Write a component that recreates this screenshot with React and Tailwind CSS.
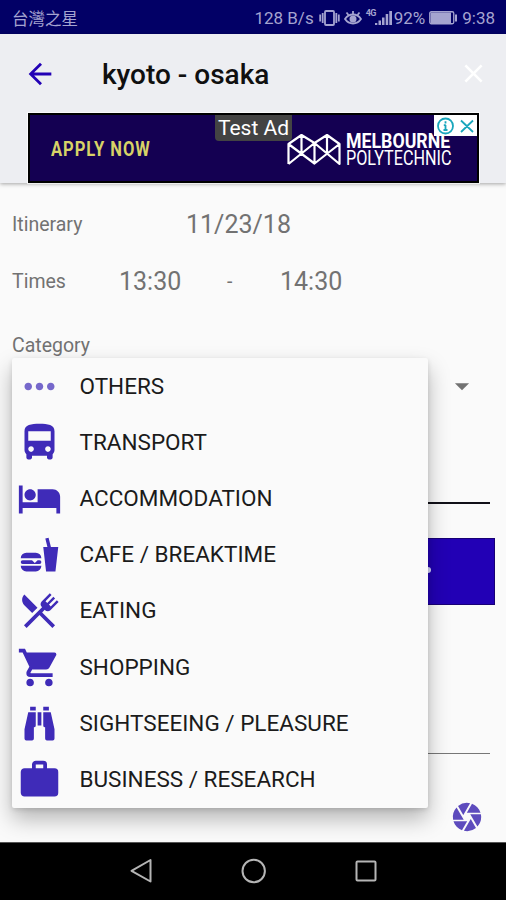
import { MdArrowBack, MdArrowDropDown, MdCamera, MdClose, MdDirectionsBus, MdHotel, MdMoreHoriz } from 'react-icons/md';

function Glyph({ d, className }) {
  return (
    <svg viewBox="0 0 24 24" fill="currentColor" className={className}>
      <path d={d} />
    </svg>
  );
}

const paths = {
  food: 'M15.5,21L14,8H16.23L15.1,3.46L16.84,3L18.09,8H22L20.5,21H15.5M5,11H10A3,3 0 0,1 13,14H2A3,3 0 0,1 5,11M13,18A3,3 0 0,1 10,21H5A3,3 0 0,1 2,18H13M3,15H8L9.5,16.5L11,15H12A1,1 0 0,1 13,16A1,1 0 0,1 12,17H3A1,1 0 0,1 2,16A1,1 0 0,1 3,15Z',
  silverware: 'M8.1,13.34L3.91,9.16C2.35,7.59 2.35,5.06 3.91,3.5L10.93,10.5L8.1,13.34M13.41,13L20.29,19.88L18.88,21.29L12,14.41L5.12,21.29L3.71,19.88L13.36,10.22L13.16,10C12.38,9.23 12.38,7.97 13.16,7.19L17.5,2.82L18.43,3.74L15.19,7L16.15,7.94L19.39,4.69L20.31,5.61L17.06,8.85L18,9.81L21.26,6.56L22.18,7.5L17.81,11.84C17.03,12.62 15.77,12.62 15,11.84L14.78,11.64L13.41,13Z',
  cart: 'M17,18C15.89,18 15,18.89 15,20A2,2 0 0,0 17,22A2,2 0 0,0 19,20C19,18.89 18.1,18 17,18M1,2V4H3L6.6,11.59L5.24,14.04C5.09,14.32 5,14.65 5,15A2,2 0 0,0 7,17H19V15H7.42A0.25,0.25 0 0,1 7.17,14.75C7.17,14.7 7.18,14.66 7.2,14.63L8.1,13H15.55C16.3,13 16.96,12.58 17.3,11.97L20.88,5.5C20.95,5.34 21,5.17 21,5A1,1 0 0,0 20,4H5.21L4.27,2M7,18C5.89,18 5,18.89 5,20A2,2 0 0,0 7,22A2,2 0 0,0 9,20C9,18.89 8.1,18 7,18Z',
  binoculars: 'M11,6H13V13H11V6M9,20A1,1 0 0,1 8,21H5A1,1 0 0,1 4,20V15L6,6H10V13A1,1 0 0,1 9,14V20M10,5H7V3H10V5M15,20V14A1,1 0 0,1 14,13V6H18L20,15V20A1,1 0 0,1 19,21H16A1,1 0 0,1 15,20M14,5V3H17V5H14Z',
  briefcase: 'M10,2H14A2,2 0 0,1 16,4V6H20A2,2 0 0,1 22,8V19A2,2 0 0,1 20,21H4C2.89,21 2,20.1 2,19V8C2,6.89 2.89,6 4,6H8V4C8,2.89 8.89,2 10,2M14,6V4H10V6H14Z',
};

const iconClass = 'w-[45px] h-[45px] shrink-0';

const categories = [
  { label: 'OTHERS', icon: <MdMoreHoriz className="w-[45px] h-[45px] shrink-0 opacity-70" /> },
  { label: 'TRANSPORT', icon: <MdDirectionsBus className={iconClass} /> },
  { label: 'ACCOMMODATION', icon: <MdHotel className={iconClass} /> },
  { label: 'CAFE / BREAKTIME', icon: <Glyph d={paths.food} className={iconClass} /> },
  { label: 'EATING', icon: <Glyph d={paths.silverware} className={iconClass} /> },
  { label: 'SHOPPING', icon: <Glyph d={paths.cart} className={iconClass} /> },
  { label: 'SIGHTSEEING / PLEASURE', icon: <Glyph d={paths.binoculars} className={iconClass} /> },
  { label: 'BUSINESS / RESEARCH', icon: <Glyph d={paths.briefcase} className={iconClass} /> },
];

function StatusBar() {
  return (
    <div className="h-[34px] shrink-0 flex items-center bg-[#020066] text-[#a5a4d0] text-[17px] leading-none pl-3 pr-[11px] pt-0.5">
      <span className="font-['Noto_Sans_CJK_TC',sans-serif] text-[16.5px]">台灣之星</span>
      <span className="ml-auto">128 B/s</span>
      <svg width="21" height="18" viewBox="0 0 21 18" fill="none" stroke="currentColor" strokeWidth="1.8" className="ml-[5px]">
        <rect x="6" y="2" width="9" height="14" rx="1" />
        <path d="M3.700 4v10M1.200 5.500v7M17.300 4v10M19.800 5.500v7" />
      </svg>
      <svg width="18" height="18" viewBox="0 0 18 18" fill="none" stroke="currentColor" strokeWidth="1.8" className="ml-[4px]">
        <path d="M1 10c4-6 12-6 16 0-4 6-12 6-16 0z" />
        <circle cx="9" cy="10" r="2.600" fill="currentColor" />
        <path d="M9 5V2M4.500 6L2.500 3.500M13.500 6l2-2.500" />
      </svg>
      <div className="relative ml-1 w-[27px] h-[18px]">
        <span className="absolute left-0 top-0 text-[9px] font-bold tracking-[-0.5px]">4G</span>
        <svg width="27" height="18" viewBox="0 0 27 18" fill="currentColor">
          <path d="M9 14h2.300v2H9zM12.500 11.500h2.500V16h-2.500zM16 8.500h2.500V16H16zM19.700 5h2.500v11h-2.500zM23.300 2H26v14h-2.700z" />
        </svg>
      </div>
      <span className="ml-[1px]">92%</span>
      <svg width="29" height="14" viewBox="0 0 29 14" className="ml-[4px]">
        <rect x=".75" y=".75" width="24" height="12" rx="1.500" fill="none" stroke="currentColor" strokeWidth="1.300" />
        <path d="M1.500 1.500h20.500v10.500H1.500zM26 3.500h2v7h-2z" fill="currentColor" />
      </svg>
      <span className="ml-[4px]">9:38</span>
    </div>
  );
}

function AdBanner() {
  return (
    <div className="relative ml-[28px] w-[451px] h-[70px] flex items-center bg-[#140052] border-2 border-black outline outline-1 outline-white/70">
      <span className="ml-[21px] mt-[3px] w-[103px] text-[19.5px] font-bold text-[#d8d267] whitespace-nowrap">
        <span className="inline-block origin-left scale-x-[0.85] tracking-[1.1px]">APPLY NOW</span>
      </span>
      <svg width="54" height="34" viewBox="0 0 54 34" fill="none" stroke="white" strokeWidth="2.200" strokeLinejoin="round" className="ml-auto mr-[5px] mt-[3px]">
        <path d="M1.500 31V11L14.500 2l13 8 12.500-8 12.500 9v20L27.500 10 1.500 31M1.500 11l26 19.500 25-19.500M14.500 2v18.500M40 2v18.500M27.500 10v20.500" />
      </svg>
      <div className="w-[106px] mr-[25px] mt-[3px] text-white text-[19.5px] leading-[17px] whitespace-nowrap">
        <div className="origin-left scale-x-[0.91] font-bold">MELBOURNE</div>
        <div className="origin-left scale-x-[0.83]">POLYTECHNIC</div>
      </div>
      <div className="absolute left-[185px] top-0 h-[26px] w-[77px] rounded-b-sm bg-[#434343] text-white text-[21px] leading-[27px] text-center whitespace-nowrap">
        Test Ad
      </div>
      <div className="absolute right-0 top-0 w-[43px] h-[21px] flex items-center justify-center bg-white text-[#19a6bc]">
        <svg width="40" height="18" viewBox="0 0 40 18" fill="none" stroke="currentColor" strokeWidth="1.800">
          <circle cx="9.500" cy="9" r="7.500" />
          <path d="M9.500 8v5.500M9.500 4.200v2.200M7.800 8.200h2M7.500 13h4M25 3.500l12 11.500M37 3.500L25 15" />
        </svg>
      </div>
    </div>
  );
}

function CategoryMenu() {
  return (
    <div className="absolute left-3 top-[175px] w-[416px] rounded-[2px] bg-[#fafafa] shadow-[0_11px_22px_rgba(0,0,0,0.28),0_2px_5px_rgba(0,0,0,0.12)]">
      {categories.map((category) => (
        <div key={category.label} className="h-[56.2px] flex items-center pl-[5px] text-[#3f2bb8]">
          {category.icon}
          <span className="ml-[17.5px] mt-px text-[22.5px] text-[#1b1b1b] whitespace-nowrap">{category.label}</span>
        </div>
      ))}
    </div>
  );
}

export default function App() {
  return (
    <div className="w-[506px] h-[900px] flex flex-col overflow-hidden bg-[#fafafa] font-['Roboto',sans-serif]">
      <StatusBar />

      {/* App bar */}
      <header className="relative z-10 h-[149px] shrink-0 bg-[#edeef2] shadow-[0_1px_4px_rgba(0,0,0,0.35)]">
        <div className="h-[79px] flex items-center pl-[23px] pr-[16px]">
          <MdArrowBack className="w-[34px] h-[34px] text-[#2200b5]" />
          <h1 className="ml-[45px] mt-0.5 text-[28px] font-medium text-[#101010] whitespace-nowrap">kyoto - osaka</h1>
          <MdClose className="ml-auto w-[31px] h-[31px] mr-[1.5px] text-white" />
        </div>
        <AdBanner />
      </header>

      {/* Form */}
      <main className="relative h-[659px] shrink-0 overflow-hidden text-[#727272]">
        <div className="h-[84px] flex items-center pl-3">
          <span className="w-[174px] text-[19.5px]">Itinerary</span>
          <span className="text-[25px]">11/23/18</span>
        </div>
        <div className="h-[30px] flex items-center pl-3">
          <span className="w-[107px] text-[19.5px]">Times</span>
          <span className="w-[108px] text-[25px]">13:30</span>
          <span className="w-[53px] text-[19.5px]">-</span>
          <span className="text-[25px]">14:30</span>
        </div>
        <div className="mt-[34px] h-[30px] flex items-center pl-3 text-[19.5px]">Category</div>
        <div className="h-[49px] flex items-center justify-end pr-[27px]">
          <MdArrowDropDown className="w-[34px] h-[34px]" />
        </div>
        <div className="mt-[92px] ml-4 mr-4 h-[2px] bg-[#111018]" />
        <div className="mt-[34px] ml-3 w-[483px] h-[67px] flex items-center bg-[#2200b5] border border-[#180075]">
          <span className="ml-[412px] mt-[-4px] w-1.5 h-1.5 rounded-full bg-[#d8d8ff]" />
        </div>
        <div className="mt-[148px] ml-4 mr-4 h-px bg-[#777]" />
        <div className="mt-[46px] flex justify-end pr-[22px]">
          <MdCamera className="w-[34px] h-[34px] text-[#5d4bbd]" />
        </div>
        <CategoryMenu />
      </main>

      {/* System navigation */}
      <nav className="h-[58px] shrink-0 bg-black border-t border-[#555]">
        <svg width="506" height="57" viewBox="0 0 506 57" fill="none" stroke="#b5b5b5" strokeWidth="2">
          <path d="M131.500 27.800L150.500 17v21.500z" strokeLinejoin="round" />
          <circle cx="253.700" cy="28" r="11.200" />
          <rect x="356.500" y="18.500" width="19" height="19" rx="1" />
        </svg>
      </nav>
    </div>
  );
}
